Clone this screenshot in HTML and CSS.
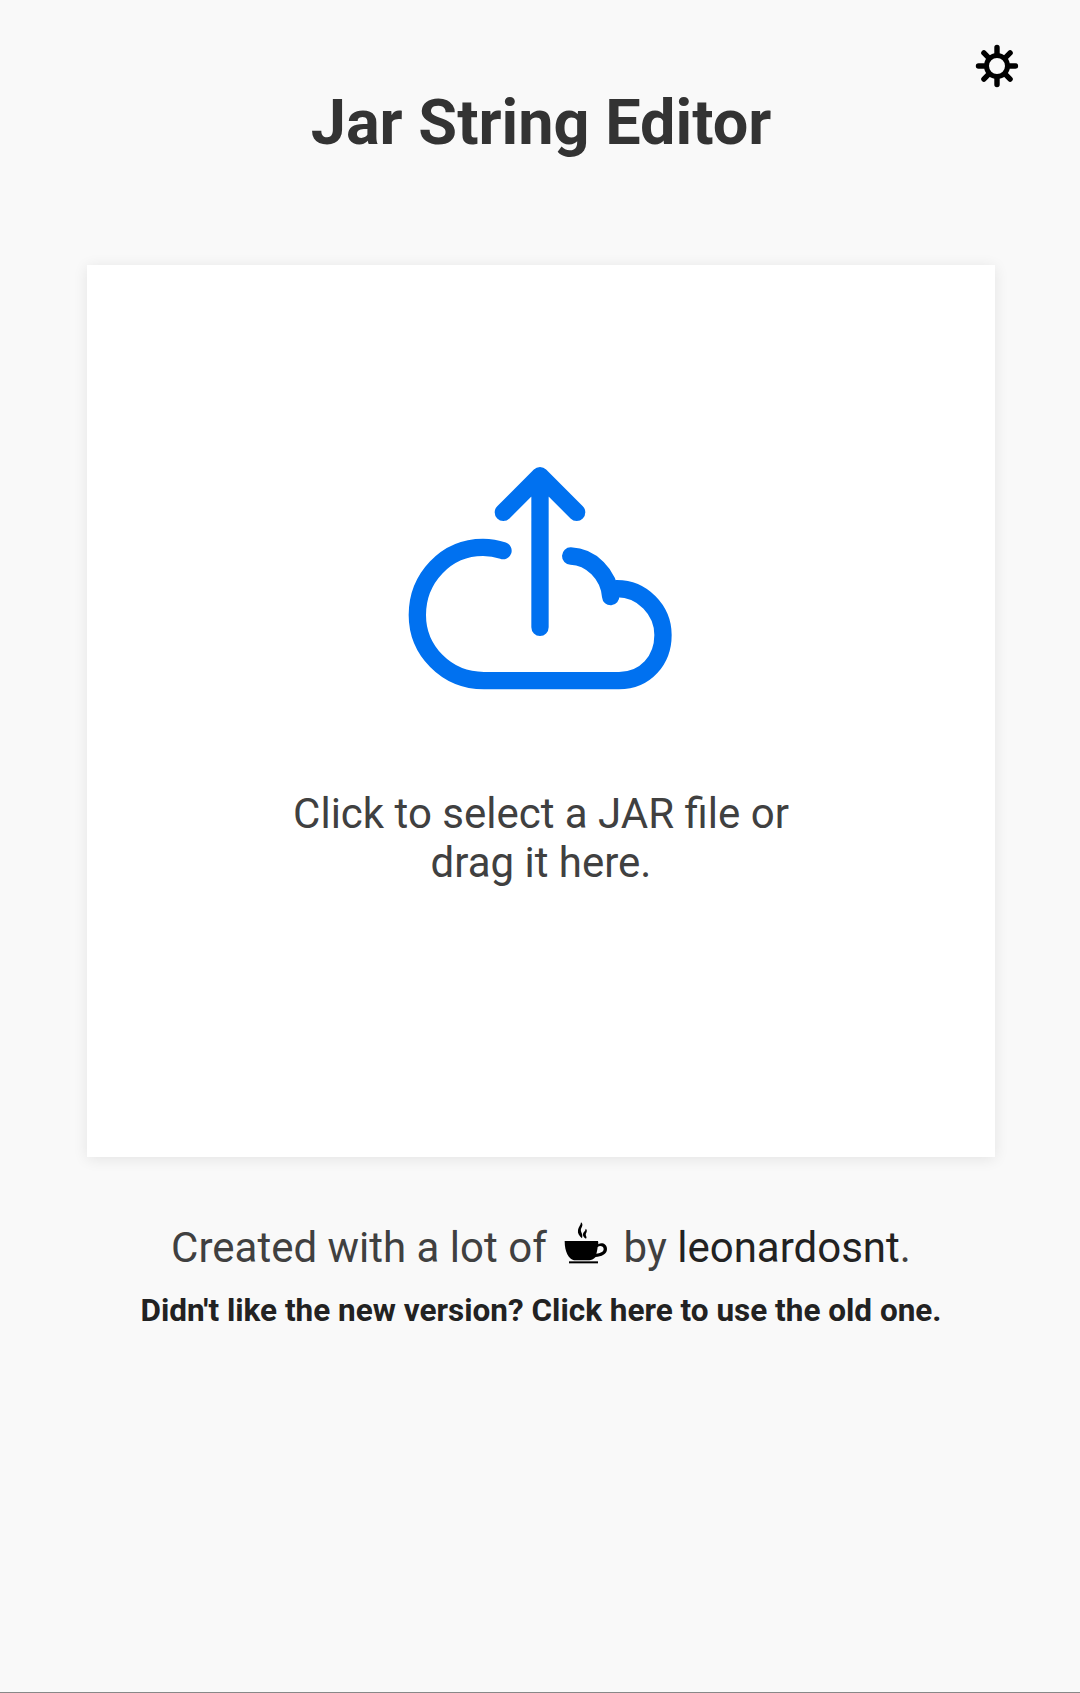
FILE: index.html
```html
<!DOCTYPE html>
<html lang="en">
<head>
    <meta charset="UTF-8">
    <meta name="viewport" content="width=device-width, initial-scale=1.0">
    <title>Jar String Editor</title>
    <link rel="stylesheet" href="styles.css">
</head>
<body>
    <a class="settings" href="#" aria-label="Settings">
        <svg width="44" height="44" viewBox="0 0 44 44" fill="none" stroke="#000" stroke-linecap="round">
            <circle cx="22" cy="22" r="10.5" stroke-width="5"/>
            <path stroke-width="5.4" d="M22 3.5V9M22 35V40.5M3.5 22H9M35 22H40.5M8.9 8.9L12.8 12.8M31.2 31.2L35.1 35.1M8.9 35.1L12.8 31.2M31.2 12.8L35.1 8.9"/>
        </svg>
    </a>
    <header>
        <h1>Jar String Editor</h1>
    </header>
    <main>
        <div class="dropzone">
            <svg class="upload-icon" width="300" height="260" viewBox="0 0 900 780" fill="none" stroke="#0071f0" stroke-width="52" stroke-linecap="round" stroke-linejoin="round">
                <path d="M453 532V80M343 187L453 77L563 187"/>
                <path d="M342 302C322 295 302 292 282 292C170 292 85 385 85 495C85 600 170 692 285 692H690C770 692 822 630 822 555C822 480 760 415 682 416"/>
                <path d="M545 318C605 320 660 372 665 440"/>
            </svg>
            <p class="dropzone-text">Click to select a JAR file or<br>drag it here.</p>
        </div>
    </main>
    <footer>
        <p class="credits">Created with a lot of
            <svg class="cup" width="46" height="44" viewBox="0 0 138 132" fill="#000">
                <path d="M8 57H108C109 61 109 64 109 67C118 60 135 65 135 81C135 98 118 103 101 105C94 112 88 114 82 115H36C20 111 8 90 8 57ZM107 75C106 83 105 89 103 95C114 94 125 90 125 81C125 72 113 70 107 75Z"/>
                <path d="M21 118H108V124H21Z"/>
                <path d="M57 1C68 10 54 18 57 28C59 34 63 38 60 49C52 42 46 34 48 24C49 15 57 10 57 1ZM71 20C80 27 69 33 72 41C73 44 75 46 72 50C65 46 62 41 63 35C64 29 71 27 71 20Z"/>
            </svg>
            by <a href="#">leonardosnt</a>.</p>
        <p class="old-version"><a href="#">Didn't like the new version? Click here to use the old one.</a></p>
    </footer>
</body>
</html>
```
FILE: styles.css
```css
html, body {
    height: 100%;
}
body {
    box-sizing: border-box;
    position: relative;
    margin: 0;
    padding: 0;
    background-color: #f9f9f9;
    border-bottom: 1px solid #888;
    font-family: Roboto, "Liberation Sans", sans-serif;
    color: #404040;
}
a {
    color: inherit;
    text-decoration: none;
}
.settings {
    position: absolute;
    top: 44px;
    left: 975px;
    display: block;
    line-height: 0;
}
header {
    padding: 88px 0 0 2px;
    text-align: center;
}
h1 {
    margin: 0;
    font-size: 63px;
    line-height: 70px;
    font-weight: 700;
    color: #333;
}
main {
    margin: 107px 85px 0 87px;
}
.dropzone {
    display: flex;
    flex-direction: column;
    align-items: center;
    height: 892px;
    background-color: #fff;
    box-shadow: 0 2px 14px rgba(0, 0, 0, 0.09);
}
.upload-icon {
    margin: 185px 4px 0 0;
}
.dropzone-text {
    margin: 79px 0 0;
    text-align: center;
    font-size: 42px;
    line-height: 49px;
}
footer {
    margin-top: 65px;
    padding-left: 2px;
    text-align: center;
}
.credits {
    margin: 0;
    font-size: 42px;
    line-height: 48px;
}
.credits a {
    color: #222;
}
.cup {
    margin: 0 5px;
    vertical-align: -4px;
}
.old-version {
    margin: 21px 0 0;
    font-size: 31.5px;
    line-height: 36px;
    font-weight: 700;
    color: #222;
}
```
